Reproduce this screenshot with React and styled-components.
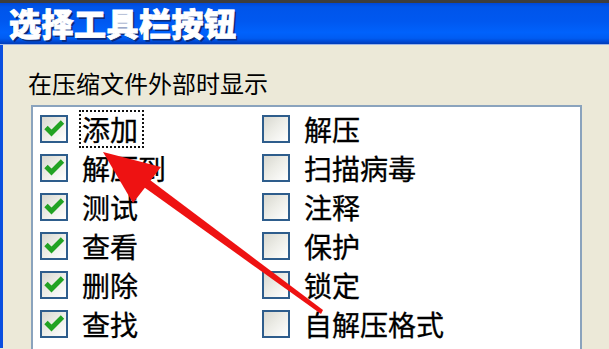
import styled, { createGlobalStyle } from "styled-components"

const GlobalStyle = createGlobalStyle`
  html, body {
    margin: 0;
    padding: 0;
    background: #ECE9D8;
    overflow: hidden;
  }
  body {
    font-family: "Noto Sans CJK SC", "Noto Sans", sans-serif;
  }
`

const Window = styled.div`
  position: relative;
  width: 609px;
  height: 349px;
  overflow: hidden;
  background: #ECE9D8;
`

const TopStrip = styled.div`
  height: 3px;
  background: #3d3d3d;
`

const TitleBar = styled.div`
  height: 42px;
  display: flex;
  align-items: flex-start;
  padding: 2px 0 0 9px;
  box-sizing: border-box;
  background: linear-gradient(
    to bottom,
    #0048d8 0%,
    #0055ea 10%,
    #0058f0 45%,
    #0062fc 72%,
    #005cf2 86%,
    #0047d0 95%,
    #003cb6 100%
  );
  border-bottom: 1px solid #9db5e6;
`

const Title = styled.h1`
  margin: 0;
  font-size: 32px;
  line-height: 34px;
  font-weight: 900;
  color: #ffffff;
  letter-spacing: 0.5px;
  -webkit-text-stroke: 0.8px #ffffff;
  text-shadow: 2px 2px 0 #0b2a7a;
`

const Frame = styled.div`
  display: flex;
  height: 303px;
`

const LeftEdge = styled.div`
  width: 3px;
  background: #0a4fe0;
  flex-shrink: 0;
`

const Body = styled.div`
  flex: 1;
  padding: 26px 0 0 25px;
`

const GroupLabel = styled.div`
  font-size: 24px;
  line-height: 24px;
  color: #000;
  margin-bottom: 10px;
`

const ListBox = styled.div`
  margin-left: 3px;
  width: 551px;
  height: 260px;
  box-sizing: border-box;
  background: #ffffff;
  border: 2px solid #8aa3bd;
  padding: 2px 0 0 7px;
  display: grid;
  grid-template-columns: 222px auto;
  grid-auto-rows: 39px;
`

const Item = styled.label`
  display: flex;
  align-items: center;
  gap: 11px;
`

const Box = styled.span`
  width: 28px;
  height: 28px;
  box-sizing: border-box;
  border: 2px solid #2e5d8c;
  background: linear-gradient(135deg, #d8d8d0 0%, #ececE6 45%, #ffffff 100%);
  display: flex;
  align-items: center;
  justify-content: center;
  flex-shrink: 0;
`

const ItemText = styled.span`
  height: 38px;
  box-sizing: border-box;
  display: flex;
  align-items: center;
  padding: 0 4px 0 1px;
  border: 2px dotted ${(p) => (p.$focused ? "#111" : "transparent")};
  font-size: 28px;
  line-height: 28px;
  color: #000;
  -webkit-text-stroke: 0.3px #000;
`

const ArrowLayer = styled.svg`
  position: absolute;
  left: 0;
  top: 0;
  pointer-events: none;
`

const CheckMark = () => (
  <svg width="21" height="17" viewBox="0 0 21 17">
    <polyline
      points="2,7.5 7.5,13 18.5,2"
      fill="none"
      stroke="#22a323"
      strokeWidth="4.8"
      strokeLinejoin="miter"
    />
  </svg>
)

const rows = [
  [{ text: "添加", on: true, focus: true }, { text: "解压" }],
  [{ text: "解压到", on: true }, { text: "扫描病毒" }],
  [{ text: "测试", on: true }, { text: "注释" }],
  [{ text: "查看", on: true }, { text: "保护" }],
  [{ text: "删除", on: true }, { text: "锁定" }],
  [{ text: "查找", on: true }, { text: "自解压格式" }],
]

const App = () => {
  return (
    <>
      <GlobalStyle />
      <Window>
        <TopStrip />
        <TitleBar>
          <Title>选择工具栏按钮</Title>
        </TitleBar>
        <Frame>
          <LeftEdge />
          <Body>
            <GroupLabel>在压缩文件外部时显示</GroupLabel>
            <ListBox>
              {rows.flat().map((it) => (
                <Item key={it.text}>
                  <Box>{it.on && <CheckMark />}</Box>
                  <ItemText $focused={it.focus}>{it.text}</ItemText>
                </Item>
              ))}
            </ListBox>
          </Body>
        </Frame>
        <ArrowLayer width="609" height="349" viewBox="0 0 609 349">
          <polygon points="141,185 146,177 323,310 321,314" fill="#ee1212" />
          <polygon points="103,152 161,167 133,203" fill="#ee1212" />
        </ArrowLayer>
      </Window>
    </>
  )
}

export default App
